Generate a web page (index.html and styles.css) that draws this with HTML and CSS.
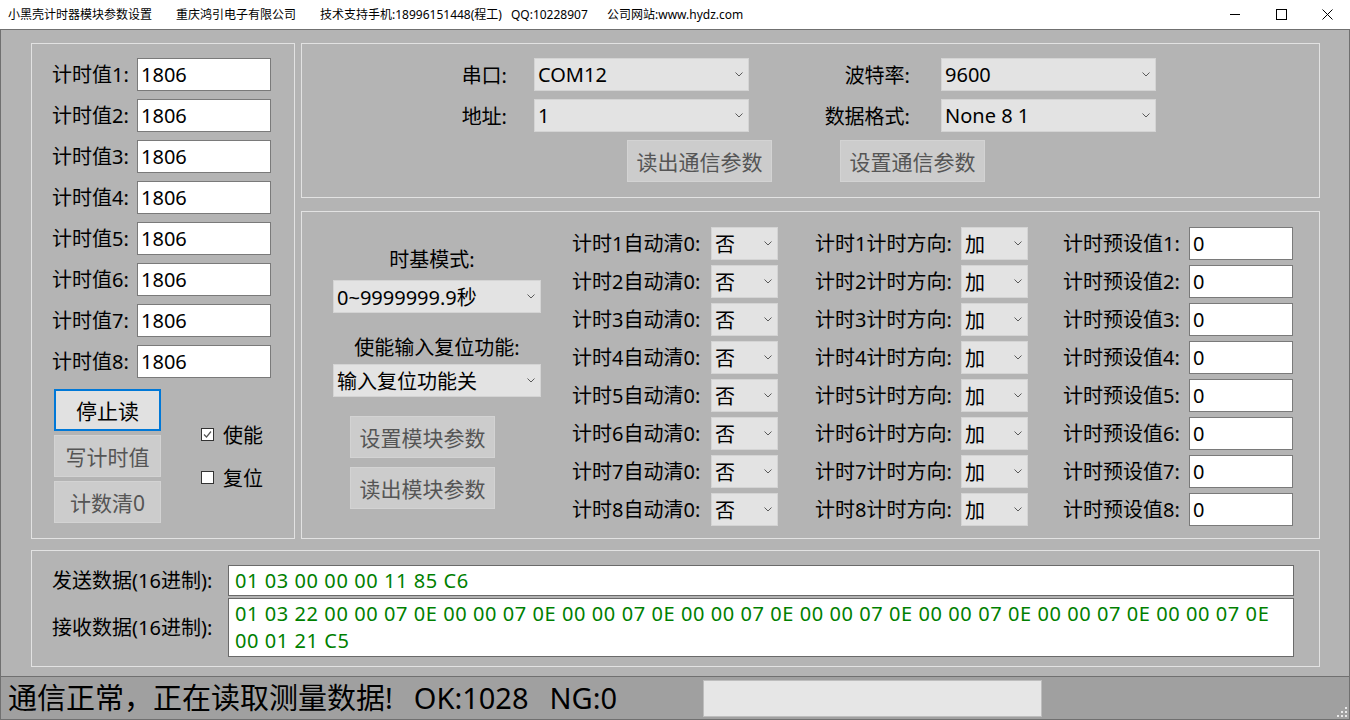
FILE: index.html
```html
<!DOCTYPE html>
<html lang="zh-CN">
<head>
<meta charset="utf-8">
<title>小黑壳计时器模块参数设置</title>
<link rel="stylesheet" href="styles.css">
</head>
<body>
<div class="window">
  <div class="titlebar">
    <div class="title-texts">
      <span class="t1">小黑壳计时器模块参数设置</span>
      <span class="t2">重庆鸿引电子有限公司</span>
      <span class="t3">技术支持手机:18996151448(程工)<span class="qq">QQ:10228907</span></span>
      <span class="t5">公司网站:www.hydz.com</span>
    </div>
    <div class="wincontrols">
      <div class="wc"><svg width="11" height="11" viewBox="0 0 11 11"><line x1="0" y1="5.5" x2="10" y2="5.5" stroke="#000" stroke-width="1"/></svg></div>
      <div class="wc"><svg width="11" height="11" viewBox="0 0 11 11"><rect x="0.5" y="0.5" width="10" height="10" fill="none" stroke="#000" stroke-width="1"/></svg></div>
      <div class="wc"><svg width="11" height="11" viewBox="0 0 11 11"><path d="M0.5 0.5 L10.5 10.5 M10.5 0.5 L0.5 10.5" stroke="#000" stroke-width="1"/></svg></div>
    </div>
  </div>

  <div class="client">
    <div class="top">
      <div class="group left-group">
        <div class="rows">
          <div class="row"><span class="lbl">计时值1:</span><div class="field">1806</div></div>
          <div class="row"><span class="lbl">计时值2:</span><div class="field">1806</div></div>
          <div class="row"><span class="lbl">计时值3:</span><div class="field">1806</div></div>
          <div class="row"><span class="lbl">计时值4:</span><div class="field">1806</div></div>
          <div class="row"><span class="lbl">计时值5:</span><div class="field">1806</div></div>
          <div class="row"><span class="lbl">计时值6:</span><div class="field">1806</div></div>
          <div class="row"><span class="lbl">计时值7:</span><div class="field">1806</div></div>
          <div class="row"><span class="lbl">计时值8:</span><div class="field">1806</div></div>
        </div>
        <div class="actions">
          <div class="btncol">
            <div class="btn primary">停止读</div>
            <div class="btn disabled">写计时值</div>
            <div class="btn disabled">计数清0</div>
          </div>
          <div class="checks">
            <div class="check"><span class="box"><svg width="11" height="11" viewBox="0 0 11 11"><path d="M2 5.5 L4.5 8 L9 2.5" fill="none" stroke="#555" stroke-width="1.2"/></svg></span>使能</div>
            <div class="check"><span class="box"></span>复位</div>
          </div>
        </div>
      </div>

      <div class="rightcol">
        <div class="group comm">
          <div class="comm-row">
            <span class="l1">串口:</span>
            <div class="combo wide"><span>COM12</span><svg class="chev" width="8" height="5" viewBox="0 0 8 5"><path d="M0.5 0.5 L4 4 L7.5 0.5" fill="none" stroke="#5a5a5a"/></svg></div>
            <span class="l2">波特率:</span>
            <div class="combo wide"><span>9600</span><svg class="chev" width="8" height="5" viewBox="0 0 8 5"><path d="M0.5 0.5 L4 4 L7.5 0.5" fill="none" stroke="#5a5a5a"/></svg></div>
          </div>
          <div class="comm-row">
            <span class="l1">地址:</span>
            <div class="combo wide"><span>1</span><svg class="chev" width="8" height="5" viewBox="0 0 8 5"><path d="M0.5 0.5 L4 4 L7.5 0.5" fill="none" stroke="#5a5a5a"/></svg></div>
            <span class="l2">数据格式:</span>
            <div class="combo wide"><span>None 8 1</span><svg class="chev" width="8" height="5" viewBox="0 0 8 5"><path d="M0.5 0.5 L4 4 L7.5 0.5" fill="none" stroke="#5a5a5a"/></svg></div>
          </div>
          <div class="comm-btns">
            <div class="btn disabled cbtn">读出通信参数</div>
            <div class="btn disabled cbtn second">设置通信参数</div>
          </div>
        </div>

        <div class="group module">
          <div class="mleft">
            <div class="mlabel first">时基模式:</div>
            <div class="combo mcombo"><span>0~9999999.9秒</span><svg class="chev" width="8" height="5" viewBox="0 0 8 5"><path d="M0.5 0.5 L4 4 L7.5 0.5" fill="none" stroke="#5a5a5a"/></svg></div>
            <div class="mlabel second">使能输入复位功能:</div>
            <div class="combo mcombo"><span>输入复位功能关</span><svg class="chev" width="8" height="5" viewBox="0 0 8 5"><path d="M0.5 0.5 L4 4 L7.5 0.5" fill="none" stroke="#5a5a5a"/></svg></div>
            <div class="btn disabled mbtn first">设置模块参数</div>
            <div class="btn disabled mbtn">读出模块参数</div>
          </div>
          <div class="mgrid" id="mgrid"></div>
        </div>
      </div>
    </div>

    <div class="group data">
      <div class="drow">
        <span class="dl">发送数据(16进制):</span>
        <div class="hexbox send">01 03 00 00 00 11 85 C6</div>
      </div>
      <div class="drow">
        <span class="dl">接收数据(16进制):</span>
        <div class="hexbox recv">01 03 22 00 00 07 0E 00 00 07 0E 00 00 07 0E 00 00 07 0E 00 00 07 0E 00 00 07 0E 00 00 07 0E 00 00 07 0E<br>00 01 21 C5</div>
      </div>
    </div>
  </div>

  <div class="statusbar">
    <div class="status-text">通信正常，正在读取测量数据!<span class="ok">OK:1028</span><span class="ng">NG:0</span></div>
    <div class="progress"></div>
    <svg class="grip" width="11" height="11" viewBox="0 0 11 11">
      <rect x="8" y="0" width="2" height="2" fill="#e8e8e8"/>
      <rect x="4" y="4" width="2" height="2" fill="#e8e8e8"/>
      <rect x="8" y="4" width="2" height="2" fill="#e8e8e8"/>
      <rect x="0" y="8" width="2" height="2" fill="#e8e8e8"/>
      <rect x="4" y="8" width="2" height="2" fill="#e8e8e8"/>
      <rect x="8" y="8" width="2" height="2" fill="#e8e8e8"/>
    </svg>
  </div>
</div>
<script>
(function(){
  var g=document.getElementById('mgrid');
  var chev='<svg class="chev" width="8" height="5" viewBox="0 0 8 5"><path d="M0.5 0.5 L4 4 L7.5 0.5" fill="none" stroke="#5a5a5a"/></svg>';
  var h='';
  for(var i=1;i<=8;i++){
    h+='<span class="ga">计时'+i+'自动清0:</span>'+
       '<div class="combo small"><span>否</span>'+chev+'</div>'+
       '<span class="gb">计时'+i+'计时方向:</span>'+
       '<div class="combo small"><span>加</span>'+chev+'</div>'+
       '<span class="gc">计时预设值'+i+':</span>'+
       '<div class="field preset">0</div>';
  }
  g.innerHTML=h;
})();
</script>
</body>
</html>
```

FILE: styles.css
```css
html, body {
  margin: 0;
  padding: 0;
}
body {
  width: 1350px;
  height: 720px;
  overflow: hidden;
  background: #b4b4b4;
  font-family: "Noto Sans", "Noto Sans CJK SC", sans-serif;
  color: #000;
}
.window {
  width: 1350px;
  height: 720px;
  display: flex;
  flex-direction: column;
}

/* title bar */
.titlebar {
  height: 29px;
  flex: none;
  background: #fff;
  border-bottom: 1px solid #707070;
  display: flex;
  justify-content: space-between;
}
.title-texts {
  display: flex;
  font-size: 12px;
  line-height: 29px;
  padding-left: 8px;
  white-space: nowrap;
}
.t1 { width: 168px; }
.t2 { width: 144px; }
.t3 { width: 287px; }
.qq { margin-left: 9px; }
.wincontrols { display: flex; }
.wc {
  width: 46px;
  height: 29px;
  display: flex;
  align-items: center;
  justify-content: center;
}

/* client area */
.client {
  height: 646px;
  flex: none;
  box-sizing: border-box;
  border-left: 1px solid #707070;
  border-right: 1px solid #707070;
  padding: 13px 0 0 30px;
}
.top {
  display: flex;
  gap: 6px;
  height: 496px;
}
.group {
  box-sizing: border-box;
  border: 1px solid #e2e2e2;
}
.left-group {
  width: 264px;
  height: 496px;
  padding: 14px 0 0 20px;
}
.rows {
  display: flex;
  flex-direction: column;
  gap: 8px;
}
.row {
  display: flex;
  align-items: center;
  height: 33px;
}
.lbl {
  width: 85px;
  font-size: 20px;
  line-height: 26px;
}
.field {
  box-sizing: border-box;
  width: 134px;
  height: 33px;
  background: #fff;
  border: 1px solid #7a7a7a;
  font-size: 20px;
  line-height: 31px;
  padding-left: 3px;
}
.actions {
  display: flex;
  margin-top: 11px;
  padding-left: 2px;
}
.btncol {
  display: flex;
  flex-direction: column;
  gap: 4px;
}
.btn {
  box-sizing: border-box;
  height: 42px;
  display: flex;
  align-items: center;
  justify-content: center;
  font-size: 21px;
  white-space: nowrap;
}
.btncol .btn { width: 107px; }
.btn.primary {
  background: #e1e1e1;
  border: 2px solid #0078d7;
  color: #000;
}
.btn.disabled {
  background: #cccccc;
  border: 1px solid #d3d3d3;
  color: #555555;
}
.checks {
  margin-left: 40px;
  padding-top: 35px;
  display: flex;
  flex-direction: column;
  gap: 22px;
}
.check {
  display: flex;
  align-items: center;
  height: 21px;
  font-size: 20px;
}
.box {
  box-sizing: border-box;
  width: 13px;
  height: 13px;
  border: 1px solid #333;
  background: #fff;
  margin-right: 9px;
  display: flex;
  align-items: center;
  justify-content: center;
}

/* right column */
.rightcol {
  width: 1019px;
  display: flex;
  flex-direction: column;
  gap: 13px;
}
.comm {
  height: 155px;
  padding-top: 14px;
}
.comm-row {
  display: flex;
  align-items: center;
  height: 33px;
  margin-bottom: 8px;
  font-size: 20px;
}
.l1 { width: 205px; text-align: right; margin-right: 27px; }
.l2 { width: 161px; text-align: right; margin-right: 31px; }
.combo {
  box-sizing: border-box;
  height: 33px;
  background: #e3e3e3;
  border: 1px solid #d4d4d4;
  display: flex;
  align-items: center;
  justify-content: space-between;
  padding: 0 5px 0 3px;
  font-size: 20px;
  white-space: nowrap;
}
.combo.wide { width: 215px; }
.chev { flex: none; }
.comm-btns {
  display: flex;
  margin-top: 3px;
  padding-left: 325px;
}
.cbtn { width: 145px; }
.cbtn.second { margin-left: 68px; }

.module {
  height: 328px;
  display: flex;
}
.mleft {
  width: 208px;
  margin-left: 31px;
  padding-top: 35px;
  display: flex;
  flex-direction: column;
}
.mlabel {
  font-size: 20px;
  line-height: 26px;
  height: 26px;
  text-align: center;
  margin-bottom: 7px;
}
.mlabel.first { padding-right: 10px; }
.mlabel.second { margin-top: 22px; margin-bottom: 3px; }
.mcombo { width: 208px; }
.mbtn {
  width: 145px;
  margin-left: 17px;
  margin-top: 9px;
}
.mbtn.first { margin-top: 19px; }

.mgrid {
  margin-left: 31px;
  padding-top: 15px;
  display: grid;
  grid-template-columns: 139px 67px 183px 67px 161px 104px;
  grid-auto-rows: 33px;
  row-gap: 5px;
  align-items: center;
  font-size: 20px;
}
.mgrid .ga, .mgrid .gb, .mgrid .gc { white-space: nowrap; line-height: 26px; }
.mgrid .gb { padding-left: 37px; }
.mgrid .gc { padding-left: 35px; }
.combo.small { width: 67px; }
.field.preset { width: 104px; }

/* data group */
.data {
  width: 1289px;
  height: 117px;
  margin-top: 11px;
  padding: 14px 0 0 20px;
}
.drow {
  display: flex;
  align-items: center;
  margin-bottom: 2px;
}
.dl {
  width: 176px;
  font-size: 20px;
  line-height: 26px;
  white-space: nowrap;
}
.hexbox {
  box-sizing: border-box;
  width: 1066px;
  background: #fff;
  border: 1px solid #6a6a6a;
  color: #008000;
  font-size: 20px;
  letter-spacing: 0.57px;
  padding-left: 6px;
  white-space: nowrap;
}
.hexbox.send {
  height: 31px;
  line-height: 29px;
}
.hexbox.recv {
  height: 59px;
  line-height: 27px;
  padding-top: 1px;
}

/* status bar */
.statusbar {
  position: relative;
  flex: none;
  height: 44px;
  box-sizing: border-box;
  border: 1px solid #707070;
  background: #a0a0a0;
  display: flex;
  align-items: center;
}
.status-text {
  width: 695px;
  padding-left: 7px;
  font-size: 29px;
  line-height: 36px;
  white-space: nowrap;
}
.ok { margin-left: 21px; }
.ng { margin-left: 21px; }
.progress {
  box-sizing: border-box;
  width: 339px;
  height: 37px;
  background: #e6e6e6;
  border: 1px solid #bdbdbd;
}
.grip {
  position: absolute;
  right: 1px;
  bottom: 1px;
}
```
